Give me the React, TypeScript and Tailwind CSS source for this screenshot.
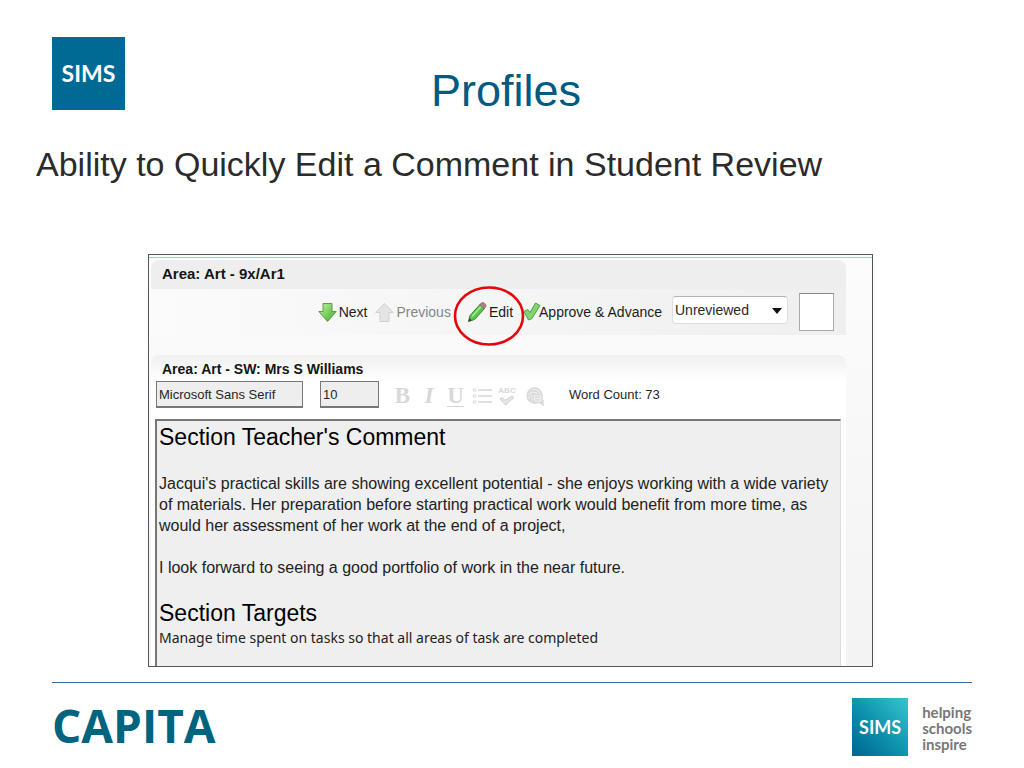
import React from "react";

interface ToolButtonProps {
  label: string;
  icon: React.ReactNode;
  disabled?: boolean;
  className?: string;
  children?: React.ReactNode;
}

const ToolButton: React.FC<ToolButtonProps> = ({ label, icon, disabled, className = "", children }) => (
  <button
    type="button"
    disabled={disabled}
    className={`flex shrink-0 items-center text-sm ${disabled ? "text-[#858585]" : "text-[#1c1c1c]"} ${className}`}
  >
    {icon}
    <span className="whitespace-nowrap">{label}</span>
    {children}
  </button>
);

const ArrowDown = () => (
  <svg width="19" height="21" viewBox="0 0 19 21" aria-hidden="true">
    <defs>
      <linearGradient id="down" x1="0" y1="0" x2="1" y2="1">
        <stop offset="0" stopColor="#c4f5a0" />
        <stop offset="1" stopColor="#35ad27" />
      </linearGradient>
    </defs>
    <path d="M5 1.5h9v8h4.2L9.5 19.5 0.8 9.5H5z" fill="url(#down)" stroke="#5d9a50" strokeLinejoin="round" />
  </svg>
);

const ArrowUp = () => (
  <svg width="19" height="21" viewBox="0 0 19 21" aria-hidden="true">
    <path d="M5 19.5h9v-9h4.2L9.5 1.5 0.8 10.5H5z" fill="#e4e4e4" stroke="#cfcfcf" strokeLinejoin="round" />
  </svg>
);

const Pencil = () => (
  <svg width="20" height="22" viewBox="0 0 20 22" aria-hidden="true">
    <path d="M1.5 20.5 3 14.5 13 3.5 17.5 7.5 7.5 18.5z" fill="#58c948" stroke="#397b35" strokeLinejoin="round" />
    <path d="M5 15.5 14.5 5" stroke="#a8ed93" strokeWidth="1.6" />
    <path d="M1.3 20.7 2.4 17 4.8 19.3z" fill="#394b35" />
    <path d="M12.5 4 14.5 1.8c1.6-1.2 5.4 1.6 4.2 4L17 8z" fill="#a8837f" stroke="#8b6f6d" strokeWidth="0.8" />
  </svg>
);

const Tick = () => (
  <svg width="18" height="20" viewBox="0 0 18 20" aria-hidden="true">
    <path
      d="M0.8 9.5 4.8 7.5 7 10.5 12.5 1 17 3.5 9 16.5 5.5 18z"
      fill="#80d56c"
      stroke="#579b50"
      strokeLinejoin="round"
    />
  </svg>
);

const BulletList = () => (
  <svg width="20" height="20" viewBox="0 0 20 20" fill="none" stroke="#d6d6d6" aria-hidden="true">
    <path d="M6 4h14M6 10h14M6 16h14" strokeWidth="1.5" />
    <circle cx="2.5" cy="4" r="1.3" />
    <circle cx="2.5" cy="10" r="1.3" />
    <circle cx="2.5" cy="16" r="1.3" />
  </svg>
);

const SpellCheck = () => (
  <span className="flex w-[18px] flex-col items-center">
    <span className="text-[8px] leading-[8px] font-bold">ABC</span>
    <svg width="16" height="11" viewBox="0 0 16 11" aria-hidden="true">
      <path d="M1 4 3.5 2.5 6 5.5 13 0.8 15 2.5 6.5 10z" fill="#e6e6e6" stroke="#d0d0d0" />
    </svg>
  </span>
);

const Thesaurus = () => (
  <svg width="19" height="19" viewBox="0 0 19 19" fill="none" stroke="#d8d8d8" strokeWidth="1.3" aria-hidden="true">
    <circle cx="8.5" cy="8.5" r="7.5" fill="#ececec" />
    <path d="M2 6c3-3 8-3 11 0M2 10c1-3 4-4 7-3M5 14c-1-2-1-4 1-5" />
    <path d="M7 7.5h9v8H9l-2-2z" fill="#f0f0f0" />
    <path d="M9 10h5M9 12.8h5M14 15.5l3 2.5v-5" />
  </svg>
);

const ReviewToolbar = () => (
  <section>
    <h2 className="flex h-[29px] items-center rounded-t-lg bg-[#eeeeee] pl-[11px] text-[15px] font-bold text-[#151515]">
      Area: Art - 9x/Ar1
    </h2>
    <div className="flex h-[46px] items-center justify-end bg-linear-to-r from-[#fbfbfb] to-[#efefef] pr-3">
      <ToolButton label="Next" icon={<ArrowDown />} className="mr-2 gap-0.5" />
      <ToolButton label="Previous" icon={<ArrowUp />} className="mr-4 gap-0.5" disabled />
      <ToolButton label="Edit" icon={<Pencil />} className="relative mr-2.5 gap-0.5">
        {/* highlight ring drawn over the toolbar */}
        <svg className="absolute -top-4 -left-3.5 z-10" width="72" height="62" viewBox="0 0 72 62" aria-hidden="true">
          <ellipse cx="36" cy="31" rx="34" ry="28.5" fill="none" stroke="#e3060b" strokeWidth="2.6" />
        </svg>
      </ToolButton>
      <ToolButton label="Approve & Advance" icon={<Tick />} className="mr-2.5 -space-x-0.5" />
      <div className="relative mr-[11px] mb-1 shrink-0">
        <select
          aria-label="Review status"
          className="h-7 w-[116px] appearance-none rounded-sm border border-[#dddddd] border-t-[#b5b5b5] bg-white pl-0.5 text-sm text-[#2a2a2a]"
        >
          <option>Unreviewed</option>
          <option>Reviewed</option>
        </select>
        <svg className="pointer-events-none absolute top-3 right-1.5" width="10" height="6" viewBox="0 0 10 6">
          <path d="M0 0h10L5 6z" fill="#111" />
        </svg>
      </div>
      <div className="h-[38px] w-[35px] shrink-0 border border-[#aaaaaa] border-t-[#888888] bg-white" />
    </div>
  </section>
);

const CommentEditor = () => (
  <section className="mt-5 rounded-t-lg bg-white">
    <div className="rounded-t-lg bg-linear-to-b from-[#f0f0f0] to-white">
      <h2 className="flex h-[26px] items-center pt-0.5 pl-[11px] text-sm font-bold text-[#151515]">
        Area: Art - SW: Mrs S Williams
      </h2>
    </div>
    <div className="flex h-[38px] items-start pl-[5px] text-[13px] text-[#262626]">
      <input
        aria-label="Font"
        defaultValue="Microsoft Sans Serif"
        className="h-[27px] w-[147px] border border-[#777777] border-b-2 bg-[#eeeeee] pl-0.5"
      />
      <input
        aria-label="Font size"
        defaultValue="10"
        className="ml-[17px] h-[27px] w-[59px] border border-[#777777] border-b-2 bg-[#eeeeee] pl-0.5"
      />
      <div className="ml-[15px] flex h-[30px] items-center text-[#d8d8d8]">
        <button type="button" className="w-[17px] font-['Liberation_Serif',serif] text-[23px] font-bold">B</button>
        <button type="button" className="ml-2.5 w-4 font-['Liberation_Serif',serif] text-[23px] font-bold italic">I</button>
        <button type="button" className="ml-2.5 w-[17px] font-['Liberation_Serif',serif] text-[23px] leading-5 font-bold">
          <span className="block border-b border-[#d2d2d2]">U</span>
        </button>
        <button type="button" aria-label="Bullets" className="ml-2"><BulletList /></button>
        <button type="button" aria-label="Spelling" className="ml-1.5"><SpellCheck /></button>
        <button type="button" aria-label="Thesaurus" className="ml-2.5"><Thesaurus /></button>
      </div>
      <p className="ml-6 leading-[28px] whitespace-nowrap">Word Count: 73</p>
    </div>
    <div className="mr-[5px] ml-1 h-[247px] border-t-2 border-r border-l-2 border-t-[#777777] border-r-[#dddddd] border-l-[#777777] bg-[#efefef] pt-0.5 pl-0.5 text-base leading-[21px] text-[#222222]">
      <h3 className="text-[23px] leading-[29px] text-black">Section Teacher's Comment</h3>
      <p className="mt-[21px]">
        Jacqui's practical skills are showing excellent potential - she enjoys working with a wide variety
        <br />
        of materials. Her preparation before starting practical work would benefit from more time, as
        <br />
        would her assessment of her work at the end of a project,
      </p>
      <p className="mt-[21px]">I look forward to seeing a good portfolio of work in the near future.</p>
      <h3 className="mt-[21px] text-[23px] leading-[29px] text-black">Section Targets</h3>
      <p className="font-['Noto_Sans',sans-serif] text-sm leading-5">
        Manage time spent on tasks so that all areas of task are completed
      </p>
    </div>
  </section>
);

const Footer = () => (
  <footer className="mt-[15px] mr-[52px] ml-[52px] flex items-start justify-between border-t border-[#3f6d94] pt-[15px]">
    <div className="font-['Open_Sans',sans-serif] text-[46px] leading-[54px] font-bold text-[#00647f]">CAPITA</div>
    <div className="flex gap-3.5">
      <div className="flex h-[58px] w-14 items-center justify-center bg-linear-to-tr from-[#006592] via-[#0f94ae] to-[#35c6cd] font-['Lato',sans-serif] text-[18px] font-bold text-white">
        SIMS
      </div>
      <p className="pt-1.5 font-['Lato',sans-serif] text-[15px] leading-4 font-bold text-[#777777]">
        helping
        <br />
        schools
        <br />
        inspire
      </p>
    </div>
  </footer>
);

const App: React.FC = () => (
  <main className="min-h-screen bg-white font-['Liberation_Sans',Arial,sans-serif]">
    <header className="grid grid-cols-[73px_1fr_73px] pt-[37px] pr-16 pl-[52px]">
      <div className="flex h-[73px] items-center justify-center bg-[#006a94] font-['Lato',sans-serif] text-[23px] font-bold text-white">
        SIMS
      </div>
      <h1 className="pt-[30px] text-center text-[45px] leading-[48px] text-[#005a82]">Profiles</h1>
    </header>
    <p className="mt-[29px] pl-9 text-[34px] leading-10 text-[#2b2b2b]">
      Ability to Quickly Edit a Comment in Student Review
    </p>
    <div className="mt-[70px] mr-[151px] ml-[148px] border border-[#555555] bg-linear-to-b from-[#fcfcfc] to-[#f3f3f3] pt-0.5">
      <div className="border-t border-[#a9c1e2] pt-0.5 pr-[26px] pl-0.5">
        <ReviewToolbar />
        <CommentEditor />
      </div>
    </div>
    <Footer />
  </main>
);

export default App;
